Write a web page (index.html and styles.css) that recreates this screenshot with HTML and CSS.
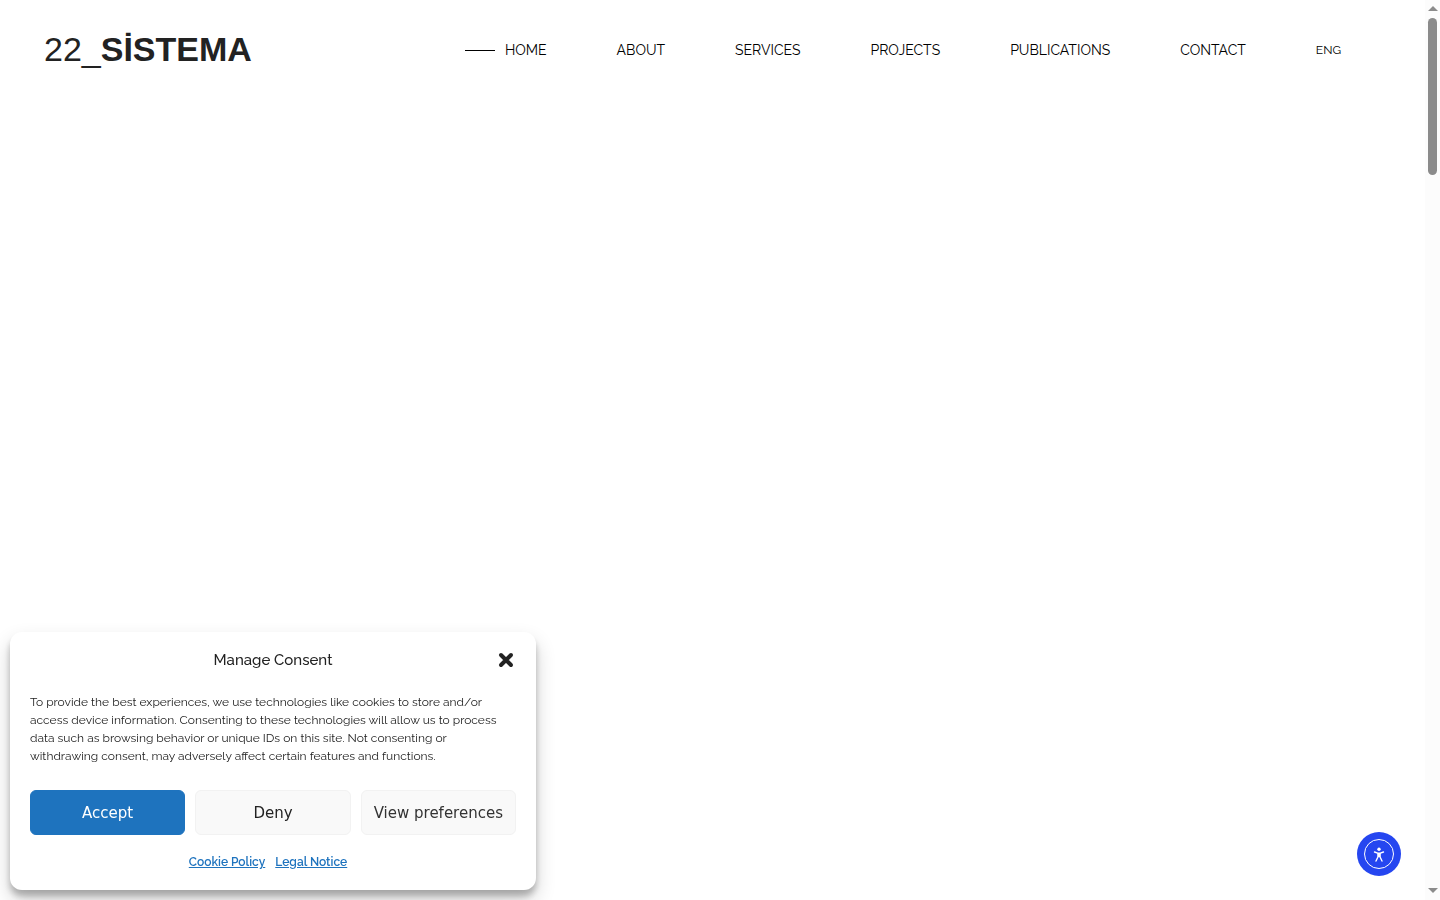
FILE: index.html
```html
<!DOCTYPE html>
<html lang="en">
<head>
  <meta charset="UTF-8" />
  <meta name="viewport" content="width=device-width, initial-scale=1.0"/>
  <title>22_SİSTEMA</title>
  <link rel="stylesheet" href="styles.css">
</head>
<body>

  <header class="header">
    <a class="logo" href="#">22_<strong>SİSTEMA</strong></a>
    <nav class="menu">
      <a class="active" href="#">HOME</a>
      <a href="#">ABOUT</a>
      <a href="#">SERVICES</a>
      <a href="#">PROJECTS</a>
      <a href="#">PUBLICATIONS</a>
      <a href="#">CONTACT</a>
      <a class="lang" href="#">ENG</a>
    </nav>
  </header>

  <main class="content"></main>

  <!-- Cookie banner -->
  <section class="consent" role="dialog" aria-labelledby="consent-title">
    <div class="consent-header">
      <div class="consent-title" id="consent-title">Manage Consent</div>
      <button class="consent-close" type="button" aria-label="Close">
        <svg viewBox="0 0 20 20" width="20" height="20"><path d="M5 5l10 10M15 5L5 15" stroke="#222" stroke-width="4" stroke-linecap="round"/></svg>
      </button>
    </div>
    <p class="consent-text">To provide the best experiences, we use technologies like cookies to store and/or access device information. Consenting to these technologies will allow us to process data such as browsing behavior or unique IDs on this site. Not consenting or withdrawing consent, may adversely affect certain features and functions.</p>
    <div class="consent-buttons">
      <button class="btn accept" type="button">Accept</button>
      <button class="btn deny" type="button">Deny</button>
      <button class="btn preferences" type="button">View preferences</button>
    </div>
    <div class="consent-links">
      <a href="#">Cookie Policy</a>
      <a href="#">Legal Notice</a>
    </div>
  </section>

  <!-- Accessibility button -->
  <button class="access" type="button" aria-label="Accessibility">
    <svg viewBox="0 0 44 44" width="44" height="44" fill="none">
      <circle cx="22" cy="22" r="14.5" stroke="#fff"/>
      <circle cx="22" cy="17.200" r="1.700" fill="#fff"/>
      <path d="M17.500 20l3.200 1.200h2.600l3.200-1.200M20.900 21.500v3.500l-1.900 4M23.100 21.500v3.500l1.900 4M20.900 25l1.100-1 1.100 1M22 21.500v2" stroke="#fff" stroke-width="1.400" stroke-linecap="round" stroke-linejoin="round"/>
    </svg>
  </button>

  <div class="scrollbar" aria-hidden="true">
    <svg viewBox="0 0 10 5" width="10" height="5"><path d="M0 5l5-5 5 5z" fill="#8b8b8b"/></svg>
    <div class="track"><div class="thumb"></div></div>
    <svg viewBox="0 0 10 5" width="10" height="5"><path d="M0 0l5 5 5-5z" fill="#8b8b8b"/></svg>
  </div>

</body>
</html>
```
FILE: styles.css
```css
* {
  box-sizing: border-box;
}

body {
  font-family: Raleway, Lato, sans-serif;
  background: #fff;
  color: #222;
  margin: 0;
  padding-right: 15px;
}

.header {
  display: flex;
  align-items: center;
  justify-content: space-between;
  height: 100px;
  padding: 0 84px 0 44px;
}

.logo {
  padding-bottom: 2px;
  font-family: "Liberation Sans", Arial, sans-serif;
  font-size: 34px;
  color: #222;
  text-decoration: none;
}

.menu {
  display: flex;
  align-items: center;
  gap: 70px;
}

.menu a {
  font-size: 14px;
  line-height: 20px;
  color: #000;
  text-decoration: none;
}

.menu .active {
  display: flex;
  align-items: center;
  gap: 10px;
}

.menu .active::before {
  content: "";
  width: 30px;
  height: 1px;
  background: #000;
}

.menu .lang {
  font-size: 12px;
}

.content {
  min-height: calc(100vh - 100px);
}

.consent {
  position: fixed;
  left: 10px;
  bottom: 10px;
  width: 526px;
  max-width: calc(100% - 35px);
  padding: 16px 20px 19px;
  background: #fff;
  border-radius: 12px;
  box-shadow: 0 10px 20px rgba(0,0,0,0.19), 0 6px 6px rgba(0,0,0,0.23);
}

.consent-header {
  display: grid;
  grid-template-columns: 20px 1fr 20px;
  align-items: center;
  height: 24px;
}

.consent-title {
  grid-column: 2;
  text-align: center;
  font-size: 15px;
  font-weight: 500;
}

.consent-close {
  padding: 0;
  border: 0;
  background: none;
  cursor: pointer;
}

.consent-close svg {
  display: block;
}

.consent-text {
  margin: 21px 0 25px;
  font-size: 12px;
  line-height: 18px;
}

.consent-buttons {
  display: grid;
  grid-template-columns: repeat(3, 1fr);
  gap: 10px;
}

.btn {
  height: 45px;
  padding: 0 10px;
  border: 1px solid #f2f2f2;
  border-radius: 6px;
  background: #f9f9f9;
  color: #222;
  font-family: "DejaVu Sans", sans-serif;
  font-size: 15px;
  white-space: nowrap;
  cursor: pointer;
}

.accept {
  background: #1e73be;
  border-color: #1e73be;
  color: #fff;
}

.preferences {
  color: #333;
}

.consent-links {
  display: flex;
  justify-content: center;
  gap: 10px;
  margin-top: 18px;
  padding-right: 10px;
}

.consent-links a {
  color: #1e73be;
  font-size: 12px;
  font-weight: 600;
  line-height: 18px;
}

.access {
  position: fixed;
  right: 39px;
  bottom: 24px;
  width: 44px;
  height: 44px;
  padding: 0;
  border: 0;
  border-radius: 50%;
  background: #2546f0;
  cursor: pointer;
}

.access svg {
  display: block;
}

.scrollbar {
  position: fixed;
  top: 0;
  right: 0;
  bottom: 0;
  display: flex;
  flex-direction: column;
  align-items: center;
  width: 15px;
  padding: 6px 0 7px;
  background: #fcfcfc;
}

.track {
  flex: 1;
  padding: 7px 0;
}

.thumb {
  width: 9px;
  height: 157px;
  border-radius: 5px;
  background: #8b8b8b;
}
```
